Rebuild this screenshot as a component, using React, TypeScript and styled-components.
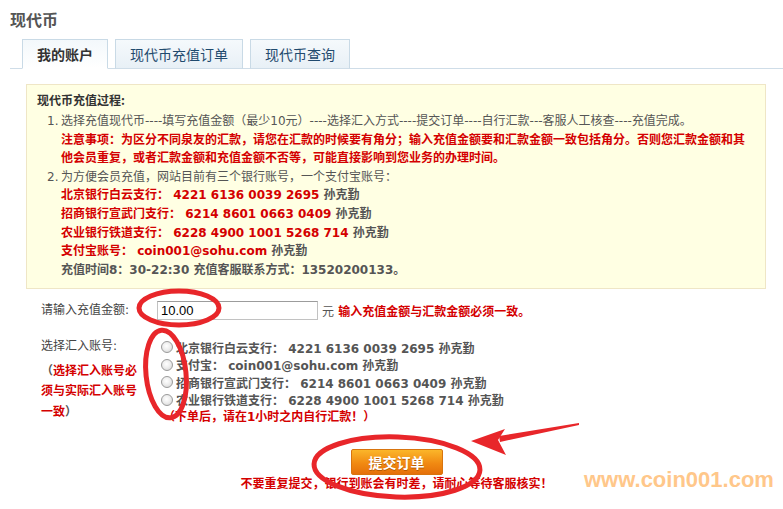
import React from "react";
import styled, { createGlobalStyle } from "styled-components";

const GlobalStyle = createGlobalStyle`
  html, body { margin: 0; padding: 0; background: #fff; }
  body {
    font-family: "DejaVu Sans", "Noto Sans CJK SC", sans-serif;
    font-size: 12px;
    color: #555;
  }
`;

const Page = styled.div`
  position: relative;
  width: 783px;
  height: 509px;
  overflow: hidden;
  box-sizing: border-box;
  padding: 8px 0 0 10px;
`;

const Title = styled.h1`
  margin: 0;
  font: bold 16px/22px "Noto Sans CJK SC", sans-serif;
  color: #555;
`;

const TabBar = styled.div`
  display: flex;
  align-items: flex-end;
  gap: 7px;
  width: 770px;
  height: 29px;
  margin-top: 9px;
  padding-left: 12px;
  box-sizing: content-box;
  border-bottom: 1px solid #cfdde8;
`;

const Tab = styled.div<{ $active?: boolean }>`
  height: 30px;
  margin-bottom: -1px;
  box-sizing: border-box;
  padding: 0 14px;
  border: 1px solid #c9dae6;
  border-bottom-color: ${(p) => (p.$active ? "#fff" : "#cfdde8")};
  background: ${(p) =>
    p.$active ? "linear-gradient(#f3f8fb, #fff)" : "linear-gradient(#f5f9fc, #e8f0f6)"};
  font: ${(p) => (p.$active ? "bold" : "normal")} 14px/28px "Noto Sans CJK SC", sans-serif;
  color: ${(p) => (p.$active ? "#333" : "#1f4a6e")};
`;

const Notice = styled.div`
  width: 740px;
  margin: 15px 0 0 16px;
  box-sizing: border-box;
  padding: 5px 10px 9px;
  background: #ffffe3;
  border: 1px solid #efe6c6;
`;

const NoticeTitle = styled.div`
  font: bold 12px/19px "Noto Sans CJK SC", sans-serif;
  color: #333;
  margin-bottom: 3px;
`;

const Item = styled.div`
  display: flex;
  padding-left: 10px;
  line-height: 18.6px;
`;

const Num = styled.span`
  width: 14px;
  flex: none;
`;

const ItemBody = styled.div`
  flex: 1;
`;

const Line = styled.div<{ $red?: boolean; $bold?: boolean }>`
  color: ${(p) => (p.$red ? "#d40000" : "#555")};
  font-weight: ${(p) => (p.$bold ? "bold" : "normal")};
`;

const Name = styled.span`
  color: #555;
`;

const Form = styled.div`
  margin-top: 12px;
  padding-left: 31px;
`;

const Row = styled.div`
  display: flex;
  align-items: center;
`;

const Label = styled.div`
  width: 116px;
  flex: none;
  color: #444;
  line-height: 17.5px;
`;

const AmountInput = styled.input`
  width: 161px;
  height: 19px;
  box-sizing: border-box;
  border: 1px solid #c2c2c2;
  border-top-color: #9c9c9c;
  padding: 0 3px;
  font: 13px "Liberation Sans", sans-serif;
  color: #000;
  outline: none;
`;

const Unit = styled.span`
  margin-left: 4px;
  color: #555;
`;

const RedText = styled.span`
  color: #d40000;
  font-weight: bold;
`;

const AccountRow = styled.div`
  display: flex;
  align-items: flex-start;
  margin-top: 18px;
`;

const LeftCol = styled.div`
  width: 116px;
  flex: none;
`;

const SideNote = styled.div`
  margin-top: 5px;
  line-height: 20.5px;
  font-weight: bold;
  color: #d40000;
`;

const Paren = styled.span`
  color: #555;
`;

const Options = styled.div`
  display: flex;
  flex-direction: column;
`;

const Option = styled.label`
  display: flex;
  align-items: center;
  gap: 3px;
  height: 17.5px;
  padding-left: 4px;
  font-weight: bold;
  color: #555;
`;

const Radio = styled.span`
  width: 12px;
  height: 12px;
  flex: none;
  box-sizing: border-box;
  border-radius: 50%;
  border: 1px solid #9a9a9a;
  background: radial-gradient(circle at 45% 40%, #fff 0%, #eee 45%, #cfcfcf 100%);
`;

const OrderNote = styled.div`
  margin-top: 3px;
  padding-left: 6px;
  line-height: 12px;
  font-weight: bold;
  color: #d40000;
`;

const SubmitArea = styled.div`
  display: flex;
  flex-direction: column;
  align-items: center;
  margin: 26px 31px 0 0;
`;

const SubmitButton = styled.button`
  width: 92px;
  height: 26px;
  border: 1px solid #d8740e;
  border-radius: 2px;
  background: linear-gradient(#fbb62a, #f18a12 55%, #e5700a);
  color: #fff;
  font: bold 14px/24px "Noto Sans CJK SC", sans-serif;
  text-shadow: 0 1px 0 #b85a00;
  padding: 0;
`;

const Warning = styled.div`
  margin-top: 2px;
  line-height: 14px;
  font-weight: bold;
  color: #d40000;
`;

const Watermark = styled.div`
  position: absolute;
  left: 584px;
  top: 469px;
  font: bold 22px/22px "Liberation Sans", Arial, sans-serif;
  color: #ffc78a;
`;

const Marks = styled.svg`
  position: absolute;
  left: 0;
  top: 0;
  pointer-events: none;
`;

const banks = [
  { bank: "北京银行白云支行：", no: "4221 6136 0039 2695" },
  { bank: "招商银行宣武门支行：", no: "6214 8601 0663 0409" },
  { bank: "农业银行铁道支行：", no: "6228 4900 1001 5268 714" },
];

const options = [
  "北京银行白云支行： 4221 6136 0039 2695 孙克勤",
  "支付宝： coin001@sohu.com 孙克勤",
  "招商银行宣武门支行： 6214 8601 0663 0409 孙克勤",
  "农业银行铁道支行： 6228 4900 1001 5268 714 孙克勤",
];

export default function App() {
  return (
    <Page>
      <GlobalStyle />
      <Title>现代币</Title>
      <TabBar>
        <Tab $active>我的账户</Tab>
        <Tab>现代币充值订单</Tab>
        <Tab>现代币查询</Tab>
      </TabBar>

      <Notice>
        <NoticeTitle>现代币充值过程:</NoticeTitle>
        <Item>
          <Num>1.</Num>
          <ItemBody>
            <Line>
              选择充值现代币----填写充值金额（最少10元）----选择汇入方式----提交订单----自行汇款---客服人工核查----充值完成。
            </Line>
            <Line $red $bold>
              注意事项：为区分不同泉友的汇款，请您在汇款的时候要有角分；输入充值金额要和汇款金额一致包括角分。否则您汇款金额和其他会员重复，或者汇款金额和充值金额不否等，可能直接影响到您业务的办理时间。
            </Line>
          </ItemBody>
        </Item>
        <Item>
          <Num>2.</Num>
          <ItemBody>
            <Line>为方便会员充值，网站目前有三个银行账号，一个支付宝账号：</Line>
            {banks.map((b) => (
              <Line $red $bold key={b.bank}>
                {b.bank} {b.no} <Name>孙克勤</Name>
              </Line>
            ))}
            <Line $red $bold>
              支付宝账号： coin001@sohu.com <Name>孙克勤</Name>
            </Line>
            <Line $bold>充值时间8：30-22:30 充值客服联系方式：13520200133。</Line>
          </ItemBody>
        </Item>
      </Notice>

      <Form>
        <Row>
          <Label>请输入充值金额:</Label>
          <AmountInput readOnly defaultValue="10.00" />
          <Unit>元</Unit>
          <RedText>&nbsp;输入充值金额与汇款金额必须一致。</RedText>
        </Row>

        <AccountRow>
          <LeftCol>
            <Label>选择汇入账号:</Label>
            <SideNote>
              <Paren>（</Paren>选择汇入账号必
              <br />
              须与实际汇入账号
              <br />
              一致<Paren>）</Paren>
            </SideNote>
          </LeftCol>
          <Options>
            {options.map((o) => (
              <Option key={o}>
                <Radio />
                {o}
              </Option>
            ))}
            <OrderNote>（下单后，请在1小时之内自行汇款！）</OrderNote>
          </Options>
        </AccountRow>

        <SubmitArea>
          <SubmitButton>提交订单</SubmitButton>
          <Warning>不要重复提交，银行到账会有时差，请耐心等待客服核实！</Warning>
        </SubmitArea>
      </Form>

      <Watermark>www.coin001.com</Watermark>

      <Marks width="783" height="509" viewBox="0 0 783 509">
        <g fill="none" stroke="#e8262a" strokeWidth="5">
          <ellipse cx="179" cy="308" rx="40" ry="17" />
          <ellipse cx="166" cy="374" rx="20" ry="44" transform="rotate(-6 166 374)" />
          <ellipse cx="397" cy="467" rx="83" ry="30" transform="rotate(2 397 467)" />
        </g>
        <g fill="#e8262a">
          <polygon points="579,423 579,425 500,442 499,436" />
          <polygon points="471,441 505,429 498,440 506,455" />
        </g>
      </Marks>
    </Page>
  );
}
